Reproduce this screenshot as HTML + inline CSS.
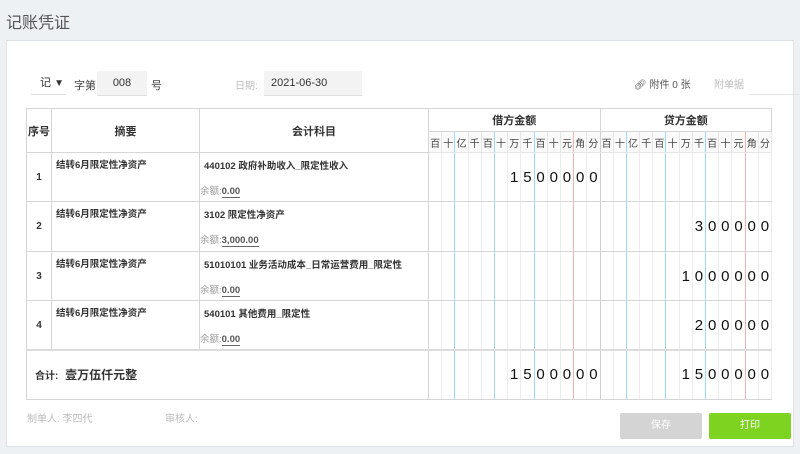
<!DOCTYPE html>
<html><head><meta charset="utf-8"><style>
*{margin:0;padding:0;box-sizing:border-box}
body{width:800px;height:454px;background:#eef1f4;font-family:"Liberation Sans","Noto Sans CJK SC",sans-serif;position:relative;overflow:hidden;color:#333}
.title{position:absolute;left:6px;top:9px;font-size:16px;color:#555}
.card{position:absolute;left:6px;top:40px;width:788px;height:407px;background:#fff;border:1px solid #dde1e5}
.abs{position:absolute;font-size:11px}
table{position:absolute;left:26px;top:108px;width:745px;border-collapse:collapse;table-layout:fixed}
td{border:1px solid #d6d6d6;font-size:10px;vertical-align:top;padding:0}
.h td{font-weight:bold;text-align:center;vertical-align:middle;font-size:11px}
.u td{text-align:center;vertical-align:middle;font-size:10px;color:#444;border-color:#e6e6e6;background:#fafafa}
td.d{border-left:1px solid #ececec;border-right:1px solid #ececec;text-align:center;vertical-align:middle;font-size:15px;color:#111}
td.b{border-right:1px solid #9fd8f3}
td.r{border-right:1px solid #f5b2b2}
td.e{border-right:1px solid #cfcfcf}
.seq{text-align:center;vertical-align:middle;font-weight:bold}
.sum{padding:4px 2px 0 4px;font-weight:bold;font-size:9.5px}
.sub{position:relative;height:48px;padding:5px 0 0 4px;font-weight:bold;font-size:9.5px}
.bal{position:absolute;left:0;bottom:4px;font-weight:normal;color:#999;font-size:9.5px}
.bal span{color:#555;font-weight:bold;border-bottom:1px solid #666}
tr.t td{border-top:2px solid #dcdcdc}
.btn{position:absolute;top:413px;width:82px;height:26px;border-radius:2px;color:#fff;font-size:10px;text-align:center;line-height:26px}
</style></head><body>
<div class="title">记账凭证</div>
<div class="card"></div>
<div class="abs" style="left:31px;top:71px;width:35px;height:24px;border-bottom:1px solid #ddd;padding-left:9px;line-height:24px">记 <span style="font-size:10px;color:#333">▼</span></div>
<div class="abs" style="left:74px;top:77px;color:#444">字第</div>
<div class="abs" style="left:97px;top:71px;width:50px;height:25px;background:#f3f3f3;border-bottom:1px solid #e0e0e0;text-align:center;line-height:25px">008</div>
<div class="abs" style="left:151px;top:77px;color:#444">号</div>
<div class="abs" style="left:235px;top:77px;color:#bbb;font-size:10px">日期:</div>
<div class="abs" style="left:264px;top:71px;width:98px;height:25px;background:#f3f3f3;border-bottom:1px solid #e0e0e0;padding-left:7px;line-height:25px">2021-06-30</div>
<div class="abs" style="left:634px;top:76px;color:#555;font-size:10px">🔗︎ 附件 0 张</div>
<div class="abs" style="left:714px;top:76px;color:#bbb;font-size:10px">附单据</div>
<div class="abs" style="left:749px;top:94px;width:50px;border-bottom:1px solid #e3e3e3"></div>
<table>
<colgroup><col style="width:25px"><col style="width:148px"><col style="width:229px">
<col span="26" style="width:13.19px"></colgroup>
<tr class="h" style="height:23px"><td rowspan="2">序号</td><td rowspan="2">摘要</td><td rowspan="2">会计科目</td><td colspan="13">借方金额</td><td colspan="13">贷方金额</td></tr>
<tr class="u" style="height:21px">
<td>百</td><td class="b">十</td><td>亿</td><td>千</td><td class="b">百</td><td>十</td><td>万</td><td class="b">千</td><td>百</td><td>十</td><td class="r">元</td><td>角</td><td class="e">分</td>
<td>百</td><td class="b">十</td><td>亿</td><td>千</td><td class="b">百</td><td>十</td><td>万</td><td class="b">千</td><td>百</td><td>十</td><td class="r">元</td><td>角</td><td>分</td></tr>
<tr style="height:49px"><td class="seq">1</td><td class="sum">结转6月限定性净资产</td><td><div class="sub">440102 政府补助收入_限定性收入<div class="bal">余额:<span>0.00</span></div></div></td>
<td class="d"></td><td class="d b"></td><td class="d"></td><td class="d"></td><td class="d b"></td><td class="d"></td><td class="d">1</td><td class="d b">5</td><td class="d">0</td><td class="d">0</td><td class="d r">0</td><td class="d">0</td><td class="d e">0</td>
<td class="d"></td><td class="d b"></td><td class="d"></td><td class="d"></td><td class="d b"></td><td class="d"></td><td class="d"></td><td class="d b"></td><td class="d"></td><td class="d"></td><td class="d r"></td><td class="d"></td><td class="d"></td></tr>
<tr style="height:50px"><td class="seq">2</td><td class="sum">结转6月限定性净资产</td><td><div class="sub">3102 限定性净资产<div class="bal">余额:<span>3,000.00</span></div></div></td>
<td class="d"></td><td class="d b"></td><td class="d"></td><td class="d"></td><td class="d b"></td><td class="d"></td><td class="d"></td><td class="d b"></td><td class="d"></td><td class="d"></td><td class="d r"></td><td class="d"></td><td class="d e"></td>
<td class="d"></td><td class="d b"></td><td class="d"></td><td class="d"></td><td class="d b"></td><td class="d"></td><td class="d"></td><td class="d b">3</td><td class="d">0</td><td class="d">0</td><td class="d r">0</td><td class="d">0</td><td class="d">0</td></tr>
<tr style="height:49px"><td class="seq">3</td><td class="sum">结转6月限定性净资产</td><td><div class="sub">51010101 业务活动成本_日常运营费用_限定性<div class="bal">余额:<span>0.00</span></div></div></td>
<td class="d"></td><td class="d b"></td><td class="d"></td><td class="d"></td><td class="d b"></td><td class="d"></td><td class="d"></td><td class="d b"></td><td class="d"></td><td class="d"></td><td class="d r"></td><td class="d"></td><td class="d e"></td>
<td class="d"></td><td class="d b"></td><td class="d"></td><td class="d"></td><td class="d b"></td><td class="d"></td><td class="d">1</td><td class="d b">0</td><td class="d">0</td><td class="d">0</td><td class="d r">0</td><td class="d">0</td><td class="d">0</td></tr>
<tr style="height:49px"><td class="seq">4</td><td class="sum">结转6月限定性净资产</td><td><div class="sub">540101 其他费用_限定性<div class="bal">余额:<span>0.00</span></div></div></td>
<td class="d"></td><td class="d b"></td><td class="d"></td><td class="d"></td><td class="d b"></td><td class="d"></td><td class="d"></td><td class="d b"></td><td class="d"></td><td class="d"></td><td class="d r"></td><td class="d"></td><td class="d e"></td>
<td class="d"></td><td class="d b"></td><td class="d"></td><td class="d"></td><td class="d b"></td><td class="d"></td><td class="d"></td><td class="d b">2</td><td class="d">0</td><td class="d">0</td><td class="d r">0</td><td class="d">0</td><td class="d">0</td></tr>
<tr class="t" style="height:49px"><td colspan="3" style="vertical-align:middle;padding-left:8px;font-weight:bold;font-size:10px">合计: <span style="font-size:12px;margin-left:4px">壹万伍仟元整</span></td>
<td class="d"></td><td class="d b"></td><td class="d"></td><td class="d"></td><td class="d b"></td><td class="d"></td><td class="d">1</td><td class="d b">5</td><td class="d">0</td><td class="d">0</td><td class="d r">0</td><td class="d">0</td><td class="d e">0</td>
<td class="d"></td><td class="d b"></td><td class="d"></td><td class="d"></td><td class="d b"></td><td class="d"></td><td class="d">1</td><td class="d b">5</td><td class="d">0</td><td class="d">0</td><td class="d r">0</td><td class="d">0</td><td class="d">0</td></tr>
</table>
<div class="abs" style="left:27px;top:410px;color:#bbb;font-size:10px">制单人: 李四代</div>
<div class="abs" style="left:165px;top:410px;color:#bbb;font-size:10px">审核人:</div>
<div class="btn" style="left:620px;background:#d4d4d4">保存</div>
<div class="btn" style="left:709px;background:#7ed321">打印</div>
</body></html>
